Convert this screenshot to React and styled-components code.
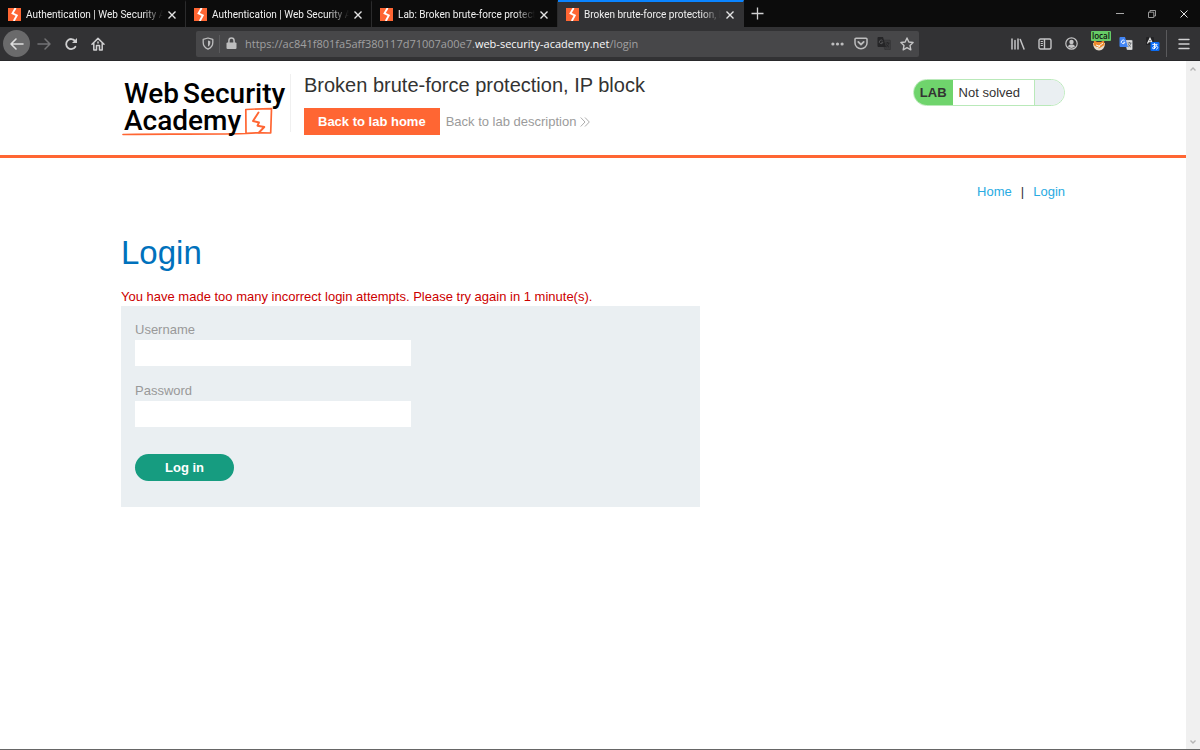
import { useState } from "react";
import styled, { createGlobalStyle } from "styled-components";

const tabs = [
    { id: 1, title: "Authentication | Web Security Academy" },
    { id: 2, title: "Authentication | Web Security Academy" },
    { id: 3, title: "Lab: Broken brute-force protection, IP block" },
    { id: 4, title: "Broken brute-force protection, IP block" },
];

export default function App() {
    const [active, setActive] = useState(4);

    return (
        <Window>
            <GlobalStyle />
            <TabBar>
                {tabs.map((tab) => (
                    <Tab key={tab.id} $active={tab.id === active}>
                        <TabTitle type="button" onClick={() => setActive(tab.id)}>
                            <Favicon />
                            <span>{tab.title}</span>
                        </TabTitle>
                        <CloseTab type="button" aria-label="Close tab">
                            <Cross size={8} width={1.4} />
                        </CloseTab>
                    </Tab>
                ))}
                <NewTab type="button" aria-label="New tab">
                    <svg width="13" height="13" viewBox="0 0 13 13" stroke="#d0d0d1" strokeWidth="1.3">
                        <path d="M6.5 .5v12M.5 6.5h12" />
                    </svg>
                </NewTab>
                <WindowButtons>
                    <WindowButton type="button" aria-label="Minimize">
                        <svg width="8" height="8" viewBox="0 0 8 8" stroke="#a8a8a8"><path d="M0 3.5h8" /></svg>
                    </WindowButton>
                    <WindowButton type="button" aria-label="Restore">
                        <svg width="8" height="8" viewBox="0 0 8 8" fill="none" stroke="#a8a8a8" strokeWidth=".9">
                            <path d="M.5 2.2h5.3v5.3H.5zM2 2.2V.5h5.5V6H5.8" />
                        </svg>
                    </WindowButton>
                    <WindowButton type="button" aria-label="Close">
                        <Cross size={8} width={1} />
                    </WindowButton>
                </WindowButtons>
            </TabBar>
            <Toolbar />
            <Viewport>
                <Page>
                    <LabHeader />
                    <LoginSection />
                </Page>
                <Scrollbar>
                    <svg width="8" height="6" viewBox="0 0 8 6" fill="none" stroke="#b5b5b5" strokeWidth="1.4"><path d="M1.5 4.5L4 2l2.5 2.5" /></svg>
                    <svg width="8" height="6" viewBox="0 0 8 6" fill="none" stroke="#b5b5b5" strokeWidth="1.4"><path d="M1.5 1.5L4 4l2.5-2.5" /></svg>
                </Scrollbar>
            </Viewport>
        </Window>
    );
}

function Toolbar() {
    return (
        <ToolbarRow>
            <BackButton type="button" aria-label="Back">
                <svg width="16" height="14" viewBox="0 0 16 14" fill="none" stroke="#dedede" strokeWidth="1.6" strokeLinecap="round" strokeLinejoin="round">
                    <path d="M14 7H2M7 2L2 7l5 5" />
                </svg>
            </BackButton>
            <ToolButton type="button" aria-label="Forward">
                <svg width="16" height="14" viewBox="0 0 16 14" fill="none" stroke="#737375" strokeWidth="1.5" strokeLinecap="round" strokeLinejoin="round">
                    <path d="M2 7h12M9 2l5 5-5 5" />
                </svg>
            </ToolButton>
            <ToolButton type="button" aria-label="Reload">
                <svg width="14" height="14" viewBox="0 0 14 14" fill="none" stroke="#cfcfd0" strokeWidth="1.8" strokeLinecap="round">
                    <path d="M11.4 9.7A5 5 0 1 1 11 3.8" />
                    <path d="M13 1v5H8z" fill="#cfcfd0" stroke="none" />
                </svg>
            </ToolButton>
            <ToolButton type="button" aria-label="Home">
                <svg width="14" height="14" viewBox="0 0 14 14" fill="none" stroke="#cfcfd0" strokeWidth="1.5" strokeLinecap="round" strokeLinejoin="round">
                    <path d="M1 7.3L7 1.4l6 5.9M2.8 6.5v6.4h2.7V8.6h3v4.3h2.7V6.5" />
                    <path d="M7 5v1" />
                </svg>
            </ToolButton>
            <Spacer />
            <UrlBar>
                <UrlIcon type="button" aria-label="Tracking protection">
                    <svg width="12" height="13" viewBox="0 0 12 13" fill="none" stroke="#bdbdbe" strokeWidth="1.3" strokeLinejoin="round">
                        <path d="M6 1l4.8 1.4v3.2c0 3-1.7 5.3-4.8 6.6C2.9 10.9 1.2 8.6 1.2 5.6V2.4z" />
                        <path d="M6 3.6v6c1.5-.9 2.3-2.3 2.3-4.2V4.2z" fill="#bdbdbe" stroke="none" />
                    </svg>
                </UrlIcon>
                <Divider />
                <UrlIcon type="button" aria-label="Connection secure">
                    <svg width="11" height="13" viewBox="0 0 11 13" fill="none" stroke="#bdbdbe" strokeWidth="1.5">
                        <path d="M2.9 6V3.7a2.6 2.6 0 0 1 5.2 0V6" />
                        <rect x=".5" y="5.5" width="10" height="6.5" rx="1" fill="#bdbdbe" stroke="none" />
                    </svg>
                </UrlIcon>
                <Url>
                    https://ac841f801fa5aff380117d71007a00e7.<b>web-security-academy.net</b>/login
                </Url>
                <UrlIcon type="button" aria-label="Page actions">
                    <svg width="13" height="4" viewBox="0 0 13 4" fill="#bdbdbe">
                        <circle cx="1.9" cy="2" r="1.6" /><circle cx="6.5" cy="2" r="1.6" /><circle cx="11.1" cy="2" r="1.6" />
                    </svg>
                </UrlIcon>
                <UrlIcon type="button" aria-label="Save to Pocket">
                    <svg width="14" height="13" viewBox="0 0 14 13" fill="none" stroke="#bdbdbe" strokeWidth="1.5" strokeLinecap="round" strokeLinejoin="round">
                        <path d="M2 1.2h10a1 1 0 0 1 1 1V6a6 5.7 0 0 1-12 0V2.2a1 1 0 0 1 1-1z" />
                        <path d="M4.3 4.9L7 7.5l2.7-2.6" strokeWidth="1.8" />
                    </svg>
                </UrlIcon>
                <UrlIcon type="button" aria-label="Translate this page">
                    <Translate back="#252527" front="#3c3c3e" ink="#58585a" mark="#252527" />
                </UrlIcon>
                <UrlIcon type="button" aria-label="Bookmark">
                    <svg width="14" height="14" viewBox="0 0 14 14" fill="none" stroke="#c4c4c5" strokeWidth="1.4" strokeLinejoin="round">
                        <path d="M7 1l1.8 4 4.3.5L10 8.5l.8 4.3L7 10.7l-3.8 2.1L4 8.5.9 5.5 5.2 5z" />
                    </svg>
                </UrlIcon>
            </UrlBar>
            <Spacer />
            <ToolButton type="button" aria-label="Library">
                <svg width="14" height="12" viewBox="0 0 14 12" fill="none" stroke="#c4c4c5" strokeWidth="1.5" strokeLinecap="round">
                    <path d="M1 1v10M4 2.5V11M7 1v10M9.3 1.5l3.7 9.5" />
                </svg>
            </ToolButton>
            <ToolButton type="button" aria-label="Sidebars">
                <svg width="14" height="12" viewBox="0 0 14 12" fill="none" stroke="#c4c4c5" strokeWidth="1.4">
                    <rect x="1" y="1" width="12" height="10" rx="1.5" />
                    <path d="M6.5 1v10" /><path d="M2.7 3.5h2.2M2.7 5.5h2.2M2.7 7.5h2.2" strokeWidth="1" />
                </svg>
            </ToolButton>
            <ToolButton type="button" aria-label="Account">
                <svg width="13" height="13" viewBox="0 0 13 13" fill="none" stroke="#c4c4c5">
                    <circle cx="6.5" cy="6.5" r="5.7" strokeWidth="1.2" />
                    <circle cx="6.5" cy="5" r="2.2" fill="#c4c4c5" stroke="none" />
                    <path d="M3 9.5c.5-1.5 1.5-2 3.5-2s3 .5 3.5 2c-1.8 1.9-5.2 1.9-7 0z" fill="#c4c4c5" stroke="none" />
                </svg>
            </ToolButton>
            <ToolButton type="button" aria-label="Proxy: local">
                <svg width="14" height="14" viewBox="0 0 14 14">
                    <path d="M1 6h12c0 4.5-2.5 7.5-6 7.5S1 10.5 1 6z" fill="#e9ddcc" />
                    <path d="M2 3l3 2h4l3-2 .5 5L7 11.5 1.5 8z" fill="#ee8b2d" />
                    <path d="M4 8l3 1 4-3M5 10.5l3-1" stroke="#fff" strokeWidth=".9" fill="none" />
                </svg>
                <Badge>local</Badge>
            </ToolButton>
            <ToolButton type="button" aria-label="Google Translate">
                <Translate back="#4285f4" front="#dcdcdc" ink="#fff" mark="#5a5f66" />
            </ToolButton>
            <ToolButton type="button" aria-label="Page translator">
                <svg width="14" height="14" viewBox="0 0 14 14" fill="none">
                    <rect x="0" y="0" width="8" height="8" rx="1" fill="#222224" />
                    <path d="M1.5 6.5L4 1.2l2.5 5.3M2.4 4.7h3.2" stroke="#eee" strokeWidth="1.1" />
                    <rect x="4.5" y="5" width="9" height="9" rx="1.3" fill="#0a6cf5" />
                    <path d="M6.3 7.4h5.2M8.5 6v6M10.5 8.5c-.5 2-2 3.5-3.5 3.3-1.2-.8.5-3 2.7-2.9 2.5 0 2.8 2.5.5 3.4" stroke="#fff" strokeWidth=".9" />
                </svg>
            </ToolButton>
            <Divider $tall />
            <MenuButton type="button" aria-label="Open menu">
                <svg width="12" height="12" viewBox="0 0 12 12" stroke="#d0d0d1" strokeWidth="1.4" strokeLinecap="round">
                    <path d="M1 1.5h10M1 6h10M1 10.5h10" />
                </svg>
            </MenuButton>
        </ToolbarRow>
    );
}

function LabHeader() {
    return (
        <Header>
            <Container>
                <LogoLink href="#academy" aria-label="Web Security Academy">
                    <Logo />
                </LogoLink>
                <LabInfo>
                    <h2>Broken brute-force protection, IP block</h2>
                    <LabLinks>
                        <HomeButton href="#lab">Back to lab home</HomeButton>
                        <DescriptionLink href="#description">
                            Back to lab description
                            <svg width="10" height="10" viewBox="0 0 10 10" fill="none" stroke="#a3a3a3" strokeWidth=".9">
                                <path d="M.7.5L5 5 .7 9.5M5 .5L9.3 5 5 9.5" />
                            </svg>
                        </DescriptionLink>
                    </LabLinks>
                </LabInfo>
                <Status>
                    <strong>LAB</strong>
                    <p>Not solved</p>
                    <i />
                </Status>
            </Container>
        </Header>
    );
}

function LoginSection() {
    return (
        <Content>
            <Nav>
                <a href="#home">Home</a>
                <span>|</span>
                <a href="#login">Login</a>
            </Nav>
            <h1>Login</h1>
            <Warning>You have made too many incorrect login attempts. Please try again in 1 minute(s).</Warning>
            <Form onSubmit={(e) => e.preventDefault()}>
                <label htmlFor="username">Username</label>
                <input id="username" type="text" name="username" />
                <label htmlFor="password">Password</label>
                <input id="password" type="password" name="password" />
                <LoginButton type="submit">Log in</LoginButton>
            </Form>
        </Content>
    );
}

function Favicon() {
    return (
        <svg width="13" height="13" viewBox="0 0 13 13">
            <rect width="13" height="13" fill="#ff6633" />
            <path d="M7.6 0L4.5 5.4l4.3 2L5.800 13" fill="none" stroke="#fff" strokeWidth="1.9" />
        </svg>
    );
}

function Cross({ size, width }) {
    return (
        <svg width={size} height={size} viewBox="0 0 8 8" stroke="#e4e4e4" strokeWidth={width}>
            <path d="M.5.5l7 7M7.5.5l-7 7" />
        </svg>
    );
}

function Translate({ back, front, ink, mark }) {
    return (
        <svg width="14" height="13" viewBox="0 0 14 13" fill="none">
            <path d="M5 3h7.5a1 1 0 0 1 1 1v8a1 1 0 0 1-1 1H8z" fill={front} stroke={mark} strokeWidth=".3" />
            <path d="M1.5 0H6l3 10H1.5a1 1 0 0 1-1-1V1a1 1 0 0 1 1-1z" fill={back} />
            <path d="M5.6 3.8a1.8 1.8 0 1 0 .3 1.5H4.3" stroke={ink} strokeWidth=".9" />
            <path d="M8.5 6h4M10.5 5v1M11.8 6c-.3 1.8-1.3 3-2.5 4M9.3 7.2c.5 1.3 1.5 2.3 2.7 3" stroke={mark} strokeWidth=".8" />
        </svg>
    );
}

function Logo() {
    return (
        <svg width="168" height="58" viewBox="0 0 168 64" overflow="visible" preserveAspectRatio="xMinYMin slice">
            <g fill="none" stroke="#ff6633" strokeLinecap="round" strokeLinejoin="round">
                <path d="M2 60.500c30-.8 80 .2 123-1l-.2-24c8-.5 17-.8 25.700-.8l-.8 24.300c-8-.4-16-.2-24.500.4" strokeWidth="1.700" />
                <path d="M137.500 38.500L132 47l6 1.500-1.500 3.200 6.800 1.300-5.300 5.500" strokeWidth="1.900" />
            </g>
            <LogoText x="3" y="29">Web</LogoText>
            <LogoText x="62" y="29">Security</LogoText>
            <LogoText x="3" y="56">Academy</LogoText>
        </svg>
    );
}

const GlobalStyle = createGlobalStyle`
    * {
        box-sizing: border-box;
    }

    body {
        margin: 0;
        background-color: #fff;
        font-family: "Liberation Sans", Arial, sans-serif;
        font-size: 13px;
        color: #333332;
    }

    h1, h2, p {
        margin: 0;
        font-weight: 400;
    }

    a {
        text-decoration: none;
    }

    button {
        border: none;
        padding: 0;
        background: none;
        font-family: inherit;
        cursor: pointer;
    }

    svg {
        display: block;
        flex-shrink: 0;
    }
`;

const Window = styled.div`
    min-height: 100vh;
    display: flex;
    flex-direction: column;
    border-bottom: 1px solid #666;
`;

const TabBar = styled.div`
    display: flex;
    height: 27px;
    background-color: #0c0c0c;
    font-family: Roboto, "Noto Sans", sans-serif;
`;

const Tab = styled.div`
    flex: 0 1 186px;
    min-width: 0;
    display: flex;
    align-items: center;
    padding: 0 9px 0 8px;
    border-top: 2px solid ${(props) => (props.$active ? "#0a84ff" : "transparent")};
    border-right: 1px solid ${(props) => (props.$active ? "#323234" : "#2b2b2c")};
    background-color: ${(props) => (props.$active ? "#323234" : "#0c0c0c")};
`;

const TabTitle = styled.button`
    flex: 1;
    min-width: 0;
    display: flex;
    align-items: center;
    gap: 5px;

    span {
        flex: 1;
        overflow: hidden;
        white-space: nowrap;
        text-align: left;
        font-size: 10px;
        line-height: 16px;
        color: #f0f0f0;
        mask-image: linear-gradient(to left, transparent, #000 20px);
    }
`;

const CloseTab = styled.button`
    display: flex;
    margin-left: 5px;
`;

const NewTab = styled.button`
    display: flex;
    align-items: center;
    justify-content: center;
    width: 27px;
`;

const WindowButtons = styled.div`
    display: flex;
    margin-left: auto;
`;

const WindowButton = styled.button`
    display: flex;
    align-items: center;
    justify-content: center;
    width: 32px;
`;

const ToolbarRow = styled.div`
    display: flex;
    align-items: center;
    height: 34px;
    padding-left: 3px;
    background-color: #323234;
    border-bottom: 1px solid #29292b;
`;

const ToolButton = styled.button`
    position: relative;
    flex: 0 0 27px;
    height: 27px;
    display: flex;
    align-items: center;
    justify-content: center;
`;

const BackButton = styled(ToolButton)`
    border-radius: 50%;
    background-color: #6a6a6b;
`;

const MenuButton = styled(ToolButton)`
    flex-basis: 33px;
`;

const Spacer = styled.div`
    flex: 0 1 85px;
`;

const UrlBar = styled.div`
    flex: 1;
    min-width: 0;
    display: flex;
    align-items: center;
    height: 26px;
    padding-right: 1px;
    border-radius: 2px;
    background-color: #474749;
`;

const UrlIcon = styled.button`
    flex: 0 0 23px;
    height: 24px;
    display: flex;
    align-items: center;
    justify-content: center;
`;

const Divider = styled.div`
    flex: 0 0 1px;
    height: ${(props) => (props.$tall ? "27px" : "18px")};
    background-color: #5a5a5c;
`;

const Url = styled.p`
    flex: 1;
    min-width: 0;
    overflow: hidden;
    white-space: nowrap;
    padding-left: 2px;
    font-family: "Open Sans", "Noto Sans", sans-serif;
    font-size: 11px;
    line-height: 18px;
    color: #a0a0a1;

    b {
        font-weight: 400;
        color: #f9f9fa;
    }
`;

const Badge = styled.span`
    position: absolute;
    top: 1px;
    left: 6px;
    padding: 0 1px;
    border-radius: 1px;
    background-color: #66cc66;
    font-family: "Open Sans", sans-serif;
    font-size: 8px;
    font-weight: 600;
    line-height: 10px;
    color: #111;
`;

const Viewport = styled.div`
    flex: 1;
    display: flex;
`;

const Page = styled.main`
    flex: 1;
    min-width: 0;
`;

const Scrollbar = styled.div`
    flex: 0 0 14px;
    display: flex;
    flex-direction: column;
    align-items: center;
    justify-content: space-between;
    padding: 5px 0 4px;
    background-color: #f0f0f0;
`;

const Header = styled.header`
    padding: 13px 16px 17px;
    border-bottom: 3px solid #ff6633;
`;

const Container = styled.div`
    display: flex;
    align-items: flex-start;
    min-height: 64px;
    max-width: 944px;
    margin: 0 auto;
`;

const LogoLink = styled.a`
    padding-right: 1px;
    border-right: 1px solid #f0f0f0;
`;

const LogoText = styled.text`
    font-family: Roboto, sans-serif;
    font-size: 28px;
    font-weight: 500;
    fill: #000;
`;

const LabInfo = styled.div`
    flex: 1;
    padding-left: 13px;

    h2 {
        font-size: 20px;
        line-height: 22px;
    }
`;

const LabLinks = styled.div`
    display: flex;
    align-items: center;
    gap: 6px;
    margin-top: 12px;
`;

const HomeButton = styled.a`
    padding: 0 14px;
    background-color: #ff6633;
    font-weight: 700;
    line-height: 27px;
    color: #fff;
`;

const DescriptionLink = styled.a`
    display: flex;
    align-items: center;
    gap: 4px;
    color: #9b9b9b;
`;

const Status = styled.div`
    display: flex;
    height: 27px;
    margin-top: 5px;
    overflow: hidden;
    border: 1px solid #b9e9b9;
    border-radius: 14px;
    line-height: 26px;

    strong {
        padding: 0 6px;
        background-color: #6fd46c;
    }

    p {
        padding: 0 14px 0 6px;
    }

    i {
        width: 30px;
        border-left: 1px solid #b9e9b9;
        background-color: #eaeff2;
    }
`;

const Content = styled.section`
    max-width: 944px;
    margin: 0 auto;
    padding: 25px 0;

    h1 {
        margin-top: 31px;
        font-size: 33px;
        line-height: 42px;
        color: #0071bc;
    }
`;

const Nav = styled.nav`
    display: flex;
    justify-content: flex-end;
    gap: 9px;
    line-height: 18px;

    a {
        color: #29abe2;
    }
`;

const Warning = styled.p`
    margin-top: 14px;
    line-height: 18px;
    color: #c00;
`;

const Form = styled.form`
    display: flex;
    flex-direction: column;
    align-items: flex-start;
    max-width: 579px;
    padding: 14px 14px 26px;
    background-color: #eaeff2;

    label {
        line-height: 20px;
        color: #999;
    }

    input {
        width: 50%;
        height: 26px;
        margin-bottom: 15px;
        padding: 0 6px;
        border: none;
        font-size: 13px;
    }
`;

const LoginButton = styled.button`
    min-width: 99px;
    height: 27px;
    margin-top: 12px;
    border-radius: 14px;
    background-color: #169c80;
    font-size: 13px;
    font-weight: 700;
    color: #fff;
`;
